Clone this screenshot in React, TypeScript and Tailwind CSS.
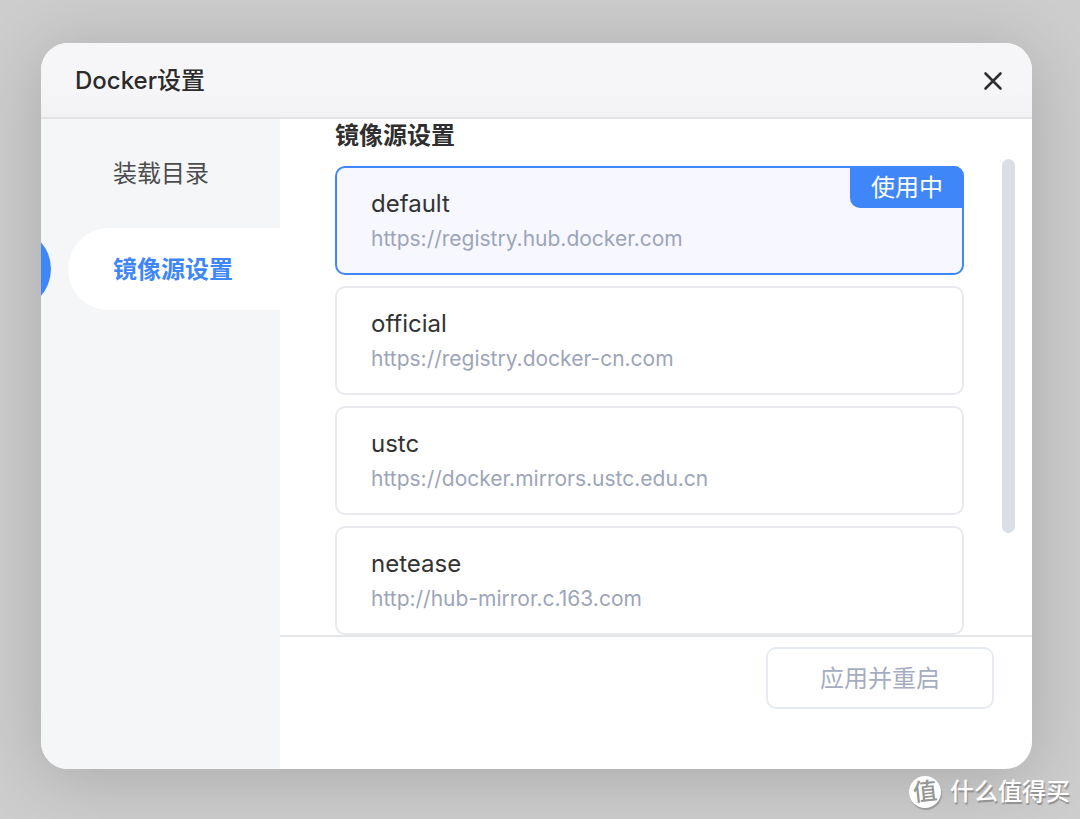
import { useState } from "react";

const menuItems = ["装载目录", "镜像源设置"];

const mirrors = [
  { name: "default", url: "https://registry.hub.docker.com" },
  { name: "official", url: "https://registry.docker-cn.com" },
  { name: "ustc", url: "https://docker.mirrors.ustc.edu.cn" },
  { name: "netease", url: "http://hub-mirror.c.163.com" },
];

const Header = () => {
  return (
    <header className="flex h-[76px] shrink-0 items-center justify-between border-b-2 border-[#e2e2e4] bg-linear-to-b from-[#f6f6f8] from-60% to-[#f2f2f4] pt-0.5 pr-[29px] pl-[34px]">
      <h1 className="text-[24px] leading-[36px] font-medium text-[#2b2b2b]">Docker设置</h1>
      <button type="button" aria-label="关闭" className="flex size-5 items-center justify-center text-[#2f2f2f]">
        <svg viewBox="0 0 20 20" className="size-5" fill="none" stroke="currentColor" strokeWidth="2.6" strokeLinecap="round">
          <path d="M2.5 2.5L17.5 17.5M17.5 2.5L2.5 17.5" />
        </svg>
      </button>
    </header>
  );
};

const Sidebar = ({ active, onSelect }: { active: string; onSelect: (item: string) => void }) => {
  return (
    <nav className="flex w-[239px] shrink-0 flex-col gap-[14px] bg-[#f5f6f8] pt-[13px] pl-[27px]">
      {menuItems.map((item) => (
        <div key={item} className="relative">
          {item === active && (
            <span className="absolute top-0 -left-[99px] size-[82px] rounded-full bg-[#3f87f8]" />
          )}
          <button
            type="button"
            onClick={() => onSelect(item)}
            className={
              item === active
                ? "h-[82px] w-full rounded-l-full bg-white pt-0.5 pl-[45px] text-left text-[24px] font-bold text-[#3f87f8]"
                : "h-[82px] w-full pt-0.5 pl-[45px] text-left text-[24px] text-[#4d4d4d]"
            }
          >
            {item}
          </button>
        </div>
      ))}
    </nav>
  );
};

const MirrorList = () => {
  const [selected, setSelected] = useState("default");

  return (
    <fieldset className="min-w-0 flex-1">
      <legend className="pb-[13px] text-[24px] leading-[34px] font-bold text-[#2f2f2f]">镜像源设置</legend>
      <div className="flex flex-col gap-[11px]">
        {mirrors.map((mirror) => (
          <label
            key={mirror.name}
            className={
              selected === mirror.name
                ? "relative block rounded-[10px] border-2 border-[#3f87f8] bg-[#f6f7ff] px-[34px] pt-[18px] pb-[17px]"
                : "relative block rounded-[10px] border-2 border-[#e8eaee] bg-white px-[34px] pt-[18px] pb-[17px]"
            }
          >
            <input
              type="radio"
              name="mirror"
              value={mirror.name}
              checked={selected === mirror.name}
              onChange={() => setSelected(mirror.name)}
              className="sr-only"
            />
            <span className="block text-[24px] leading-[36px] text-[#333333]">{mirror.name}</span>
            <span className="block text-[21px] leading-[34px] text-[#9ca5b9]">{mirror.url}</span>
            {selected === mirror.name && (
              <span className="absolute -top-0.5 -right-0.5 rounded-tr-[10px] rounded-bl-[10px] bg-[#3f87f8] px-[21px] pt-0.5 text-[24px] leading-[40px] text-white">
                使用中
              </span>
            )}
          </label>
        ))}
      </div>
    </fieldset>
  );
};

const Watermark = () => {
  return (
    <div className="absolute right-[10px] bottom-[10px] flex items-center gap-[9px] text-white">
      <span className="flex size-8 items-center justify-center rounded-full bg-white text-[24px] leading-none font-medium text-[#969696] shadow-[1px_2px_1px_#9a9a9a]">
        <span className="-rotate-6">值</span>
      </span>
      <span className="text-[24px] leading-[36px] font-medium text-shadow-[1px_2px_1px_#8e8e8e]">什么值得买</span>
    </div>
  );
};

const App = () => {
  const [active, setActive] = useState("镜像源设置");

  return (
    <div className="relative flex min-h-screen overflow-hidden bg-[#cdcdcd] pt-[43px] pr-[48px] pb-[51px] pl-[41px] font-[Inter,'Noto_Sans_CJK_SC',sans-serif]">
      <main className="flex min-w-0 flex-1 flex-col overflow-hidden rounded-[27px] bg-white shadow-[0_8px_70px_rgba(0,0,0,0.18)]">
        <Header />
        <div className="flex flex-1">
          <Sidebar active={active} onSelect={setActive} />
          <section className="flex min-w-0 flex-1 flex-col">
            <div className="flex pr-[17px] pl-[55px]">
              <MirrorList />
              <div className="mt-10 ml-[38px] h-[374px] w-[13px] rounded-full bg-[#dadfe7]" />
            </div>
            <footer className="flex justify-end border-t-2 border-[#e5e6e8] pt-[10px] pr-[38px] pb-[60px]">
              <button
                type="button"
                className="rounded-[10px] border-2 border-[#e6eaf1] px-[52px] pt-[11px] pb-[9px] text-[24px] leading-[38px] text-[#a5adc0]"
              >
                应用并重启
              </button>
            </footer>
          </section>
        </div>
      </main>
      <Watermark />
    </div>
  );
};

export default App;
